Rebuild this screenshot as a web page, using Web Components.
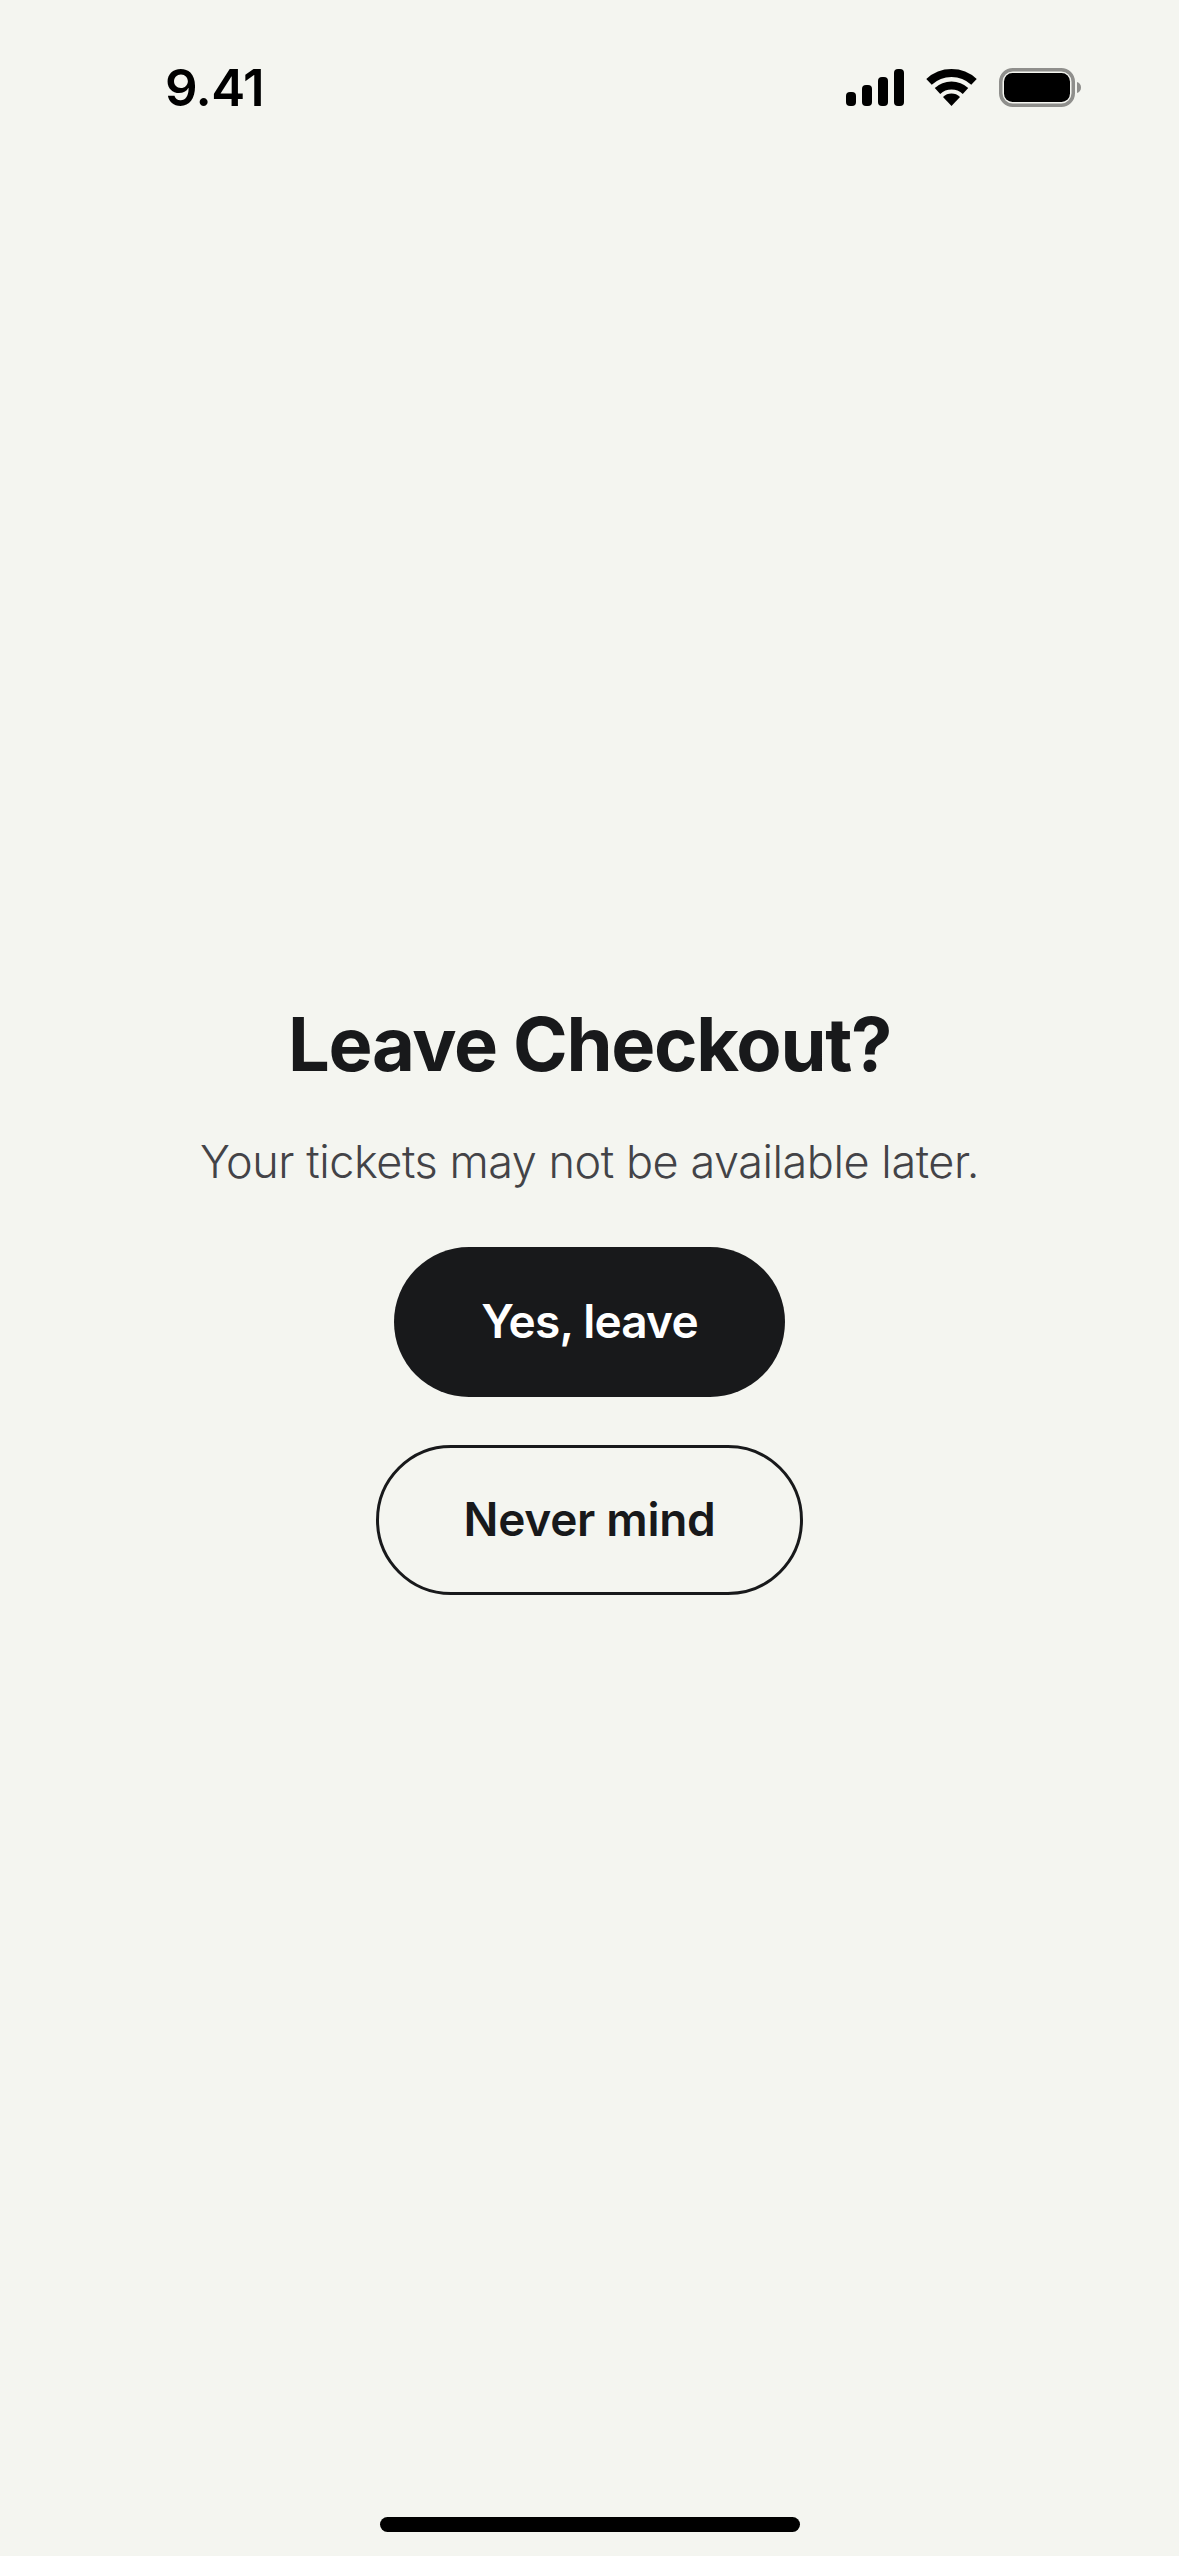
<!DOCTYPE html>
<html>
<head>
<meta charset="utf-8">
<style>
  html, body { margin: 0; padding: 0; background: #f4f5f0; }
  body { width: 1179px; height: 2556px; overflow: hidden; font-family: Inter, "Liberation Sans", sans-serif; }
</style>
</head>
<body>
<leave-screen>
  <status-bar slot="status" time="9.41"></status-bar>
  <span slot="title">Leave Checkout?</span>
  <span slot="message">Your tickets may not be available later.</span>
  <pill-button slot="actions" variant="solid">Yes, leave</pill-button>
  <pill-button slot="actions" variant="outline">Never mind</pill-button>
</leave-screen>

<script>
class StatusBar extends HTMLElement {
  constructor() {
    super();
    this.attachShadow({ mode: 'open' });
  }

  connectedCallback() {
    this.shadowRoot.innerHTML = `
      <style>
        :host {
          display: flex;
          align-items: center;
          justify-content: space-between;
          height: 39px;
          padding: 68px 98px 0 165px;
        }
        .time {
          font: 600 51px/39px Inter, "Liberation Sans", sans-serif;
          letter-spacing: -0.6px;
          color: #000;
        }
        .icons {
          display: flex;
          align-items: center;
          gap: 22px;
        }
        svg { display: block; }
      </style>
      <span class="time">${this.getAttribute('time')}</span>
      <div class="icons">
        <svg width="58" height="37" viewBox="0 0 58 37">
          <rect x="0" y="23" width="10" height="14" rx="4"/>
          <rect x="16" y="16" width="10" height="21" rx="4"/>
          <rect x="32" y="8" width="10" height="29" rx="4"/>
          <rect x="48" y="0" width="10" height="37" rx="4"/>
        </svg>
        <svg width="51" height="37" viewBox="0 0 51 37">
          <path d="M3 12.9A33 33 0 0 1 48 12.9" fill="none" stroke="#000" stroke-width="8"/>
          <path d="M11.5 22A20.5 20.5 0 0 1 39.5 22" fill="none" stroke="#000" stroke-width="8"/>
          <path d="M25.5 37L17 27.9A12.5 12.5 0 0 1 34 27.9Z"/>
        </svg>
        <svg width="82" height="39" viewBox="0 0 82 39">
          <rect x="1.75" y="1.75" width="72.5" height="35.5" rx="12" fill="none" stroke="#8f8f8c" stroke-width="3.5"/>
          <rect x="5" y="5" width="66" height="29" rx="8.5"/>
          <path d="M78 14c2.500 .8 4 2.800 4 5.500s-1.500 4.700-4 5.500z" fill="#8f8f8c"/>
        </svg>
      </div>
    `;
  }
}

class PillButton extends HTMLElement {
  constructor() {
    super();
    this.attachShadow({ mode: 'open' });
  }

  connectedCallback() {
    this.shadowRoot.innerHTML = `
      <style>
        :host {
          display: flex;
          align-items: center;
          justify-content: center;
          box-sizing: border-box;
          height: 150px;
          padding-bottom: 2px;
          border-radius: 75px;
          font: 600 46px/1 Inter, "Liberation Sans", sans-serif;
          white-space: nowrap;
        }
        :host([variant="solid"]) {
          width: 391px;
          letter-spacing: -0.8px;
          background: #18191b;
          color: #fff;
        }
        :host([variant="outline"]) {
          width: 427px;
          letter-spacing: -0.3px;
          border: 3px solid #18191b;
          color: #18191b;
        }
      </style>
      <slot></slot>
    `;
  }
}

class LeaveScreen extends HTMLElement {
  constructor() {
    super();
    this.attachShadow({ mode: 'open' });
  }

  connectedCallback() {
    this.shadowRoot.innerHTML = `
      <style>
        :host {
          display: flex;
          flex-direction: column;
          height: 2556px;
        }
        main {
          flex: 1;
          display: flex;
          flex-direction: column;
          align-items: center;
          padding-top: 893px;
        }
        h1 {
          margin: 0;
          font: 700 74px/88px Inter, "Liberation Sans", sans-serif;
          letter-spacing: -1.3px;
          color: #18191b;
        }
        p {
          margin: 46px 0 0;
          font: 350 45px/56px Inter, "Liberation Sans", sans-serif;
          letter-spacing: -0.45px;
          color: #434347;
        }
        .actions {
          margin-top: 57px;
          display: flex;
          flex-direction: column;
          align-items: center;
          gap: 48px;
        }
        .home {
          align-self: center;
          width: 420px;
          height: 15px;
          margin-bottom: 24px;
          border-radius: 8px;
          background: #000;
        }
      </style>
      <slot name="status"></slot>
      <main>
        <h1><slot name="title"></slot></h1>
        <p><slot name="message"></slot></p>
        <div class="actions"><slot name="actions"></slot></div>
      </main>
      <div class="home"></div>
    `;
  }
}

customElements.define('status-bar', StatusBar);
customElements.define('pill-button', PillButton);
customElements.define('leave-screen', LeaveScreen);
</script>
</body>
</html>
